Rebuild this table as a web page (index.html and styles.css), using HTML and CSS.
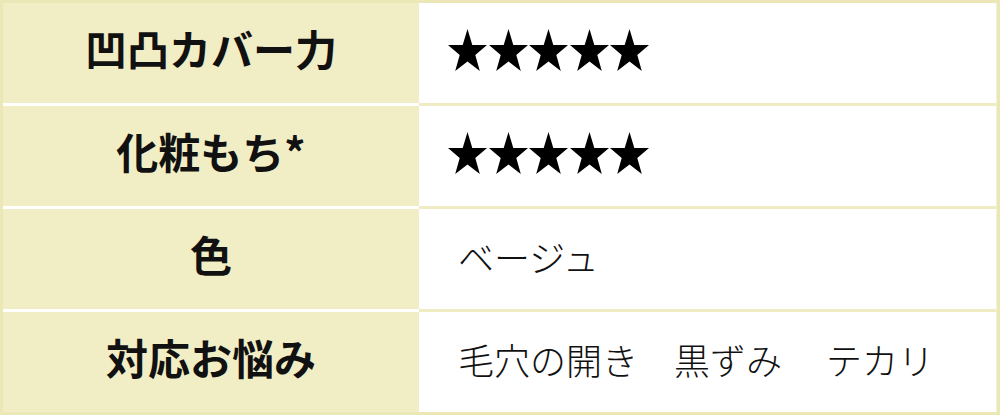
FILE: index.html
```html
<!DOCTYPE html>
<html lang="ja">
<head>
<meta charset="utf-8">
<link rel="stylesheet" href="styles.css">
</head>
<body>
<div class="spec">
  <div class="row">
    <div class="label">凹凸カバー力</div>
    <div class="value stars" aria-label="★★★★★">
      <svg class="star" viewBox="0 0 39 42"><polygon points="19.5,0 24.3,16 39,16 27.3,26 31.8,42 19.5,32.5 7.2,42 11.7,26 0,16 14.7,16"/></svg>
      <svg class="star" viewBox="0 0 39 42"><polygon points="19.5,0 24.3,16 39,16 27.3,26 31.8,42 19.5,32.5 7.2,42 11.7,26 0,16 14.7,16"/></svg>
      <svg class="star" viewBox="0 0 39 42"><polygon points="19.5,0 24.3,16 39,16 27.3,26 31.8,42 19.5,32.5 7.2,42 11.7,26 0,16 14.7,16"/></svg>
      <svg class="star" viewBox="0 0 39 42"><polygon points="19.5,0 24.3,16 39,16 27.3,26 31.8,42 19.5,32.5 7.2,42 11.7,26 0,16 14.7,16"/></svg>
      <svg class="star" viewBox="0 0 39 42"><polygon points="19.5,0 24.3,16 39,16 27.3,26 31.8,42 19.5,32.5 7.2,42 11.7,26 0,16 14.7,16"/></svg>
    </div>
  </div>
  <div class="row">
    <div class="label">化粧もち*</div>
    <div class="value stars" aria-label="★★★★★">
      <svg class="star" viewBox="0 0 39 42"><polygon points="19.5,0 24.3,16 39,16 27.3,26 31.8,42 19.5,32.5 7.2,42 11.7,26 0,16 14.7,16"/></svg>
      <svg class="star" viewBox="0 0 39 42"><polygon points="19.5,0 24.3,16 39,16 27.3,26 31.8,42 19.5,32.5 7.2,42 11.7,26 0,16 14.7,16"/></svg>
      <svg class="star" viewBox="0 0 39 42"><polygon points="19.5,0 24.3,16 39,16 27.3,26 31.8,42 19.5,32.5 7.2,42 11.7,26 0,16 14.7,16"/></svg>
      <svg class="star" viewBox="0 0 39 42"><polygon points="19.5,0 24.3,16 39,16 27.3,26 31.8,42 19.5,32.5 7.2,42 11.7,26 0,16 14.7,16"/></svg>
      <svg class="star" viewBox="0 0 39 42"><polygon points="19.5,0 24.3,16 39,16 27.3,26 31.8,42 19.5,32.5 7.2,42 11.7,26 0,16 14.7,16"/></svg>
    </div>
  </div>
  <div class="row">
    <div class="label">色</div>
    <div class="value">ベージュ</div>
  </div>
  <div class="row last">
    <div class="label">対応お悩み</div>
    <div class="value">毛穴の開き　黒ずみ　 テカリ</div>
  </div>
</div>
</body>
</html>
```
FILE: styles.css
```css
html, body {
  margin: 0;
  padding: 0;
  background: #ffffff;
}
.spec {
  width: 1000px;
  height: 415px;
  box-sizing: border-box;
  border: 3px solid #ebe7b6;
  display: flex;
  flex-direction: column;
  font-family: "Noto Sans CJK JP", "Noto Sans", sans-serif;
  color: #111;
}
.row {
  display: grid;
  grid-template-columns: 416px 1fr;
  height: 103px;
}
.row.last {
  height: 100px;
}
.label {
  background: #f1eec6;
  border-bottom: 3px solid #ffffff;
  display: flex;
  align-items: center;
  justify-content: center;
  font-weight: 700;
  font-size: 42px;
  line-height: 1;
  padding-bottom: 10px;
}
.value {
  background: #ffffff;
  border-bottom: 3px solid #efecc4;
  display: flex;
  align-items: center;
  padding-left: 39px;
  font-weight: 300;
  font-size: 36px;
  line-height: 1;
  padding-bottom: 6px;
  border-right: 1px solid #f4f2d6;
}
.row.last .label,
.row.last .value {
  border-bottom: none;
}
.stars {
  padding-left: 29px;
  padding-bottom: 6px;
  gap: 1.5px;
}
.star {
  width: 39px;
  height: 42px;
  fill: #000;
  display: block;
}
```
